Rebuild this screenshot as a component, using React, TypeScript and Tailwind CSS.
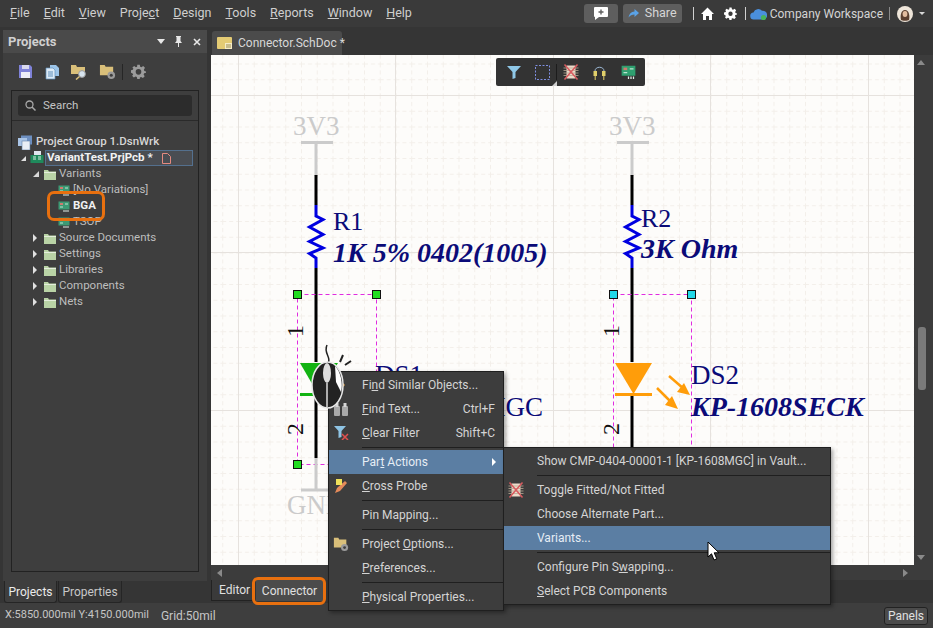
import React from "react";

const F = "font-['Roboto','Noto_Sans',sans-serif]";

function Folder({ c = "#b9d3a6", className = "" }: { c?: string; className?: string }) {
  return (
    <svg width="14" height="13" viewBox="0 0 14 13" className={className}>
      <path d="M1 2h4l1 1.5h7V12H1z" fill={c} />
      <path d="M1 4.5h12" stroke="#e4eedc" strokeWidth="1" />
    </svg>
  );
}

function Pcb({ className = "" }: { className?: string }) {
  return (
    <svg width="12" height="11" viewBox="0 0 12 11" className={className}>
      <rect x="0.5" y="0.5" width="11" height="8" fill="#3c9a74" />
      <rect x="2" y="2" width="3" height="2" fill="#d07a70" />
      <path d="M7 3h3M2 6h3" stroke="#bfe5d2" strokeWidth="1" />
      <path d="M6 9v2M8 9v2M10 9v2" stroke="#e2efe8" strokeWidth="1" />
    </svg>
  );
}

function Row({ depth, arrow, icon, bold, children }: { depth: number; arrow?: "open" | "closed"; icon: React.ReactNode; bold?: boolean; children: React.ReactNode }) {
  return (
    <div className="flex h-4 items-center" style={{ paddingLeft: depth }}>
      <span className="flex w-[10px] shrink-0 justify-start">
        {arrow === "closed" && <span className="h-0 w-0 border-y-[4px] border-l-[4px] border-y-transparent border-l-[#e0e0e0]" />}
        {arrow === "open" && <span className="h-0 w-0 border-b-[6px] border-l-[6px] border-b-[#d8d8d8] border-l-transparent" />}
      </span>
      <span className="mr-[2px] flex w-[14px] shrink-0 justify-center">{icon}</span>
      <span className={bold ? "font-bold text-[#f0f0f0]" : "text-[#bdbdbd]"}>{children}</span>
    </div>
  );
}

function MenuItem({ icon, label, hint, active, arrow }: { icon?: React.ReactNode; label: React.ReactNode; hint?: string; active?: boolean; arrow?: boolean }) {
  return (
    <div className={`relative flex h-6 items-center pl-[33px] pr-2 ${active ? "bg-[#5b7ea3] text-[#e6edf5]" : "text-[#d4d4d4]"}`}>
      {icon && <span className="absolute left-[4px] top-[4px] flex h-4 w-4 items-center justify-center">{icon}</span>}
      <span className="whitespace-nowrap">{label}</span>
      {hint && <span className="ml-auto whitespace-nowrap">{hint}</span>}
      {arrow && <span className="ml-auto mr-[-1px] h-0 w-0 border-y-[4px] border-l-[4px] border-y-transparent border-l-white" />}
    </div>
  );
}

function Sep({ left = 33 }: { left?: number }) {
  return <div className="my-[2px] h-px bg-[#1f1f1f]" style={{ marginLeft: left }} />;
}

function XChip({ size = 16 }: { size?: number }) {
  return (
    <svg width={size} height={size} viewBox="0 0 16 16">
      <rect x="3.5" y="1.5" width="9" height="13" fill="#ecd9c9" />
      <path d="M0.5 4h15M0.5 6.5h15M0.5 9h15M0.5 11.5h15" stroke="#b9a893" strokeWidth="0.8" />
      <path d="M1.5 0.5l13 15M14.5 0.5l-13 15" stroke="#d85a5f" strokeWidth="1.5" />
    </svg>
  );
}

function FolderGear({ size = 18 }: { size?: number }) {
  return (
    <svg width={size} height={size} viewBox="0 0 18 18">
      <path d="M1 2h5l1 2h8v9H1z" fill="#d9bf7a" />
      <circle cx="13" cy="13" r="4" fill="#9a9a9a" />
      <circle cx="13" cy="13" r="1.6" fill="#3d3d3d" />
    </svg>
  );
}

export default function App() {
  const menu = ["File", "Edit", "View", "Project", "Design", "Tools", "Reports", "Window", "Help"];
  const under: Record<string, [string, string, string]> = {
    File: ["", "F", "ile"],
    Edit: ["", "E", "dit"],
    View: ["", "V", "iew"],
    Project: ["Proje", "c", "t"],
    Design: ["", "D", "esign"],
    Tools: ["", "T", "ools"],
    Reports: ["", "R", "eports"],
    Window: ["", "W", "indow"],
    Help: ["", "H", "elp"],
  };
  const hLines = [95, 252.5, 410];
  const vLines = [238, 395.5, 553, 710.5, 868];
  const serif = "'Liberation Serif',serif";
  return (
    <div className={`relative flex h-[628px] w-[933px] flex-col overflow-hidden bg-[#353535] text-[12px] ${F}`}>
      {/* title bar */}
      <div className="flex h-[27px] shrink-0 items-center bg-[#3a3a3a] text-[12.5px] text-[#cfcfcf]">
        <div className="flex gap-[14px] pl-[10px]">
          {menu.map((m) => (
            <span key={m}>
              {under[m][0]}
              <u>{under[m][1]}</u>
              {under[m][2]}
            </span>
          ))}
        </div>
        <div className="ml-auto flex h-full items-center">
          <div className="flex h-[19px] w-[34px] items-center justify-center rounded-[3px] bg-[#5e5e5e]">
            <svg width="16" height="15" viewBox="0 0 16 15">
              <path d="M2 1h12a1 1 0 0 1 1 1v8a1 1 0 0 1-1 1H6l-4 3v-3a1 1 0 0 1-1-1V2a1 1 0 0 1 1-1z" fill="#fff" />
              <path d="M8 3.5v5M5.5 6h5" stroke="#5e5e5e" strokeWidth="1.4" />
            </svg>
          </div>
          <div className="ml-[5px] flex h-[19px] w-[59px] items-center justify-center gap-[6px] rounded-[3px] bg-[#5e5e5e] text-[#d6d6d6]">
            <svg width="11" height="9" viewBox="0 0 11 9">
              <path d="M6.5 0L11 4 6.5 8V5.5C4 5.5 2 6.5 0.5 8.5 1 5 3 2.8 6.5 2.5z" fill="#5aa2e6" />
            </svg>
            <span>Share</span>
          </div>
          <div className="ml-[11px] h-[13px] w-px bg-[#d0d0d0]" />
          <svg className="ml-[7px]" width="13" height="13" viewBox="0 0 13 13">
            <path d="M6.5 0.5L13 7h-2v6H8V9H5v4H2V7H0z" fill="#fff" />
          </svg>
          <svg className="ml-[10px]" width="13" height="13" viewBox="0 0 24 24">
            <path d="M10 1h4l.7 3.2 2 .8L19.5 3.3l2.8 2.8L20.6 9l.8 2L24 12v0l0 2-3 .7-.8 2 1.7 2.8-2.8 2.8-2.9-1.7-2 .8L14 24h-4l-.7-3.2-2-.8-2.8 1.7-2.8-2.8L3.4 17l-.8-2L0 14v-4l3-.7.8-2L2.1 6l2.8-2.8L7.8 5l2-.8z" fill="#fff" />
            <circle cx="12" cy="12.5" r="4" fill="#3a3a3a" />
          </svg>
          <div className="ml-[8px] h-[13px] w-px bg-[#d0d0d0]" />
          <svg className="ml-[4px]" width="17" height="14" viewBox="0 0 17 14">
            <path d="M4 12.5a3.5 3.5 0 0 1-.5-7A5 5 0 0 1 12 3.8 4 4 0 0 1 13.5 12.5z" fill="#4a8fdc" />
            <circle cx="13.5" cy="10.5" r="2.6" fill="#49b35a" />
          </svg>
          <span className="ml-[3px] whitespace-nowrap text-[12px] text-[#d4d4d4]">Company Workspace</span>
          <div className="ml-[6px] h-[13px] w-px bg-[#8a8a8a]" />
          <svg className="ml-[7px]" width="16" height="16" viewBox="0 0 16 16">
            <circle cx="8" cy="8" r="8" fill="#efe6da" />
            <path d="M4 14c-1-4 0-10 4-10s5 6 4 10c-1 1-7 1-8 0z" fill="#5c4030" />
            <ellipse cx="8" cy="8" rx="2.4" ry="3" fill="#e3bd9f" />
          </svg>
          <span className="ml-[6px] mr-[8px] h-0 w-0 border-x-[3px] border-t-[3px] border-x-transparent border-t-[#d8d8d8]" />
        </div>
      </div>

      {/* main */}
      <div className="flex min-h-0 flex-1">
        {/* left panel */}
        <div className="flex w-[211px] shrink-0 flex-col pl-[3px] pr-[4px] pt-[3px]">
          <div className="flex h-[23px] shrink-0 items-center bg-[#4a4a4a] pl-[5px] pr-[6px]">
            <span className="text-[13px] font-bold text-[#d0d0d0]">Projects</span>
            <span className="ml-auto h-0 w-0 border-x-[4px] border-t-[5px] border-x-transparent border-t-[#e8e8e8]" />
            <svg className="ml-[9px]" width="9" height="11" viewBox="0 0 9 11">
              <path d="M2 0h5v1H6.5v4L8 7H5v4H4V7H1l1.5-2V1H2z" fill="#e8e8e8" />
            </svg>
            <svg className="ml-[10px]" width="8" height="8" viewBox="0 0 8 8">
              <path d="M1 1l6 6M7 1L1 7" stroke="#e8e8e8" strokeWidth="1.6" />
            </svg>
          </div>
          <div className="flex min-h-0 flex-1 flex-col bg-[#3e3e3e]">
            <div className="flex h-[37px] shrink-0 items-center pl-[15px]">
              <svg width="15" height="15" viewBox="0 0 15 15">
                <path d="M1 1h11l2 2v11H1z" fill="#7f82d8" />
                <rect x="4" y="1" width="7" height="4" fill="#d8d8ee" />
                <rect x="3" y="8" width="9" height="6" fill="#eeeef8" />
              </svg>
              <svg className="ml-[12px]" width="15" height="16" viewBox="0 0 15 16">
                <path d="M5 1h6l3 3v8H5z" fill="#9cc4e8" />
                <path d="M1 4h7l2 2v9H1z" fill="#dceaf6" stroke="#5f8fbb" strokeWidth="0.7" />
                <path d="M3 8h5M3 10h5M3 12h5" stroke="#5f8fbb" />
              </svg>
              <svg className="ml-[11px]" width="17" height="16" viewBox="0 0 17 16">
                <path d="M0 1h5l1 2h8v7H0z" fill="#d9bf7a" />
                <circle cx="11" cy="10" r="3.4" fill="#d7e4ee" stroke="#9a9a9a" />
                <path d="M8.5 12.5L5 15.5" stroke="#d9bf7a" strokeWidth="1.6" />
              </svg>
              <span className="ml-[11px]"><FolderGear size={17} /></span>
              <div className="ml-[6px] h-[16px] w-px bg-[#262626]" />
              <svg className="ml-[8px]" width="15" height="15" viewBox="0 0 24 24">
                <path d="M10 1h4l.7 3.2 2 .8L19.5 3.3l2.8 2.8L20.6 9l.8 2L24 12v2l-3 .7-.8 2 1.7 2.8-2.8 2.8-2.9-1.7-2 .8L14 24h-4l-.7-3.2-2-.8-2.8 1.7-2.8-2.8L3.4 17l-.8-2L0 14v-4l3-.7.8-2L2.1 6l2.8-2.8L7.8 5l2-.8z" fill="#9b9b9b" />
                <circle cx="12" cy="12.5" r="4.5" fill="#3e3e3e" />
              </svg>
            </div>
            <div className="mx-[8px] mb-[9px] flex min-h-0 flex-1 flex-col border border-[#222] bg-[#3e3e3e]">
              <div className="border-b border-[#2a2a2a] px-[6px] pb-[4px] pt-[4px]">
                <div className="flex h-[21px] items-center rounded-[3px] bg-[#2c2c2c] pl-[7px] text-[#c4c4c4]">
                  <svg width="11" height="11" viewBox="0 0 11 11">
                    <circle cx="4.5" cy="4.5" r="3.5" fill="none" stroke="#a8a8a8" strokeWidth="1.3" />
                    <path d="M7 7l3.5 3.5" stroke="#a8a8a8" strokeWidth="1.5" />
                  </svg>
                  <span className="ml-[7px] text-[11.5px]">Search</span>
                </div>
              </div>
              <div className="pl-[5px] pt-[13px] text-[11.5px]">
                <div className="flex h-4 items-center">
                  <svg className="mr-[2px]" width="17" height="15" viewBox="0 0 17 15">
                    <rect x="4" y="0.5" width="11" height="9" fill="#6d8fc0" />
                    <rect x="1" y="3" width="9" height="8" fill="#a9c4e6" />
                    <rect x="5" y="6" width="8" height="9" fill="#e8eef6" stroke="#5f7fa8" strokeWidth="0.6" />
                  </svg>
                  <span className="whitespace-nowrap font-medium text-[#d6d6d6]">Project Group 1.DsnWrk</span>
                </div>
                <div className="flex h-4 items-center">
                  <span className="ml-[4px] mr-[4px] h-0 w-0 border-b-[5px] border-l-[5px] border-b-[#e0e0e0] border-l-transparent" />
                  <svg width="15" height="14" viewBox="0 0 15 14">
                    <rect x="4" y="0" width="7" height="6" fill="#dfe6ee" />
                    <rect x="0.5" y="4" width="13" height="8" fill="#1f8a5c" />
                    <path d="M3 6h3M3 8h3M8 6h3M8 8h3" stroke="#d7f0e2" />
                  </svg>
                  <div className="relative flex h-[16px] w-[148px] items-center border border-[#54708e] bg-[#4a4d52] pl-[1px] font-bold text-[#f2f2f2]">
                    <span className="whitespace-nowrap">VariantTest.PrjPcb *</span>
                    <svg className="absolute left-[116px] top-[2px]" width="9" height="11" viewBox="0 0 9 11">
                      <path d="M0.5 0.5h5l3 3v7h-8z" fill="none" stroke="#e58a80" />
                    </svg>
                  </div>
                </div>
                <Row depth={16} arrow="open" icon={<Folder />}>Variants</Row>
                <Row depth={30} icon={<Pcb />}>[No Variations]</Row>
                <Row depth={30} icon={<Pcb />} bold>BGA</Row>
                <Row depth={30} icon={<Pcb />}>TSOP</Row>
                <Row depth={16} arrow="closed" icon={<Folder />}>Source Documents</Row>
                <Row depth={16} arrow="closed" icon={<Folder />}>Settings</Row>
                <Row depth={16} arrow="closed" icon={<Folder />}>Libraries</Row>
                <Row depth={16} arrow="closed" icon={<Folder />}>Components</Row>
                <Row depth={16} arrow="closed" icon={<Folder />}>Nets</Row>
              </div>
            </div>
          </div>
          <div className="flex h-[22px] shrink-0 bg-[#353535] pl-[1px] text-[#d0d0d0]">
            <div className="flex w-[53px] items-center justify-center rounded-b-[3px] border border-t-0 border-[#252525] bg-[#3e3e3e] text-[#ececec]">Projects</div>
            <div className="ml-[1px] flex w-[64px] items-center justify-center rounded-b-[3px] border border-t-0 border-[#252525] text-[#c8c8c8]">Properties</div>
          </div>
        </div>

        {/* document column */}
        <div className="flex min-w-0 flex-1 flex-col">
          <div className="flex h-[28px] shrink-0 items-end pl-[1px]">
            <div className="flex h-[24px] w-[130px] items-center rounded-t-[3px] bg-[#4b4b4b] pl-[5px] text-[#d8d8d8]">
              <svg className="mr-[6px] shrink-0" width="15" height="12" viewBox="0 0 15 12">
                <rect x="0" y="0" width="15" height="12" rx="1" fill="#e4cb74" />
                <rect x="8" y="6" width="7" height="6" fill="#f5ecc8" />
                <path d="M9 8h5M9 10h5" stroke="#9b8b4c" />
              </svg>
              <span className="whitespace-nowrap text-[12px]">Connector.SchDoc *</span>
            </div>
          </div>
          <div className="flex min-h-0 flex-1">
            <div className="relative min-w-0 flex-1 overflow-hidden bg-[#fdfcfa]">
              <svg className="absolute inset-0 h-full w-full" viewBox="211 55 703 510" preserveAspectRatio="none">
                <defs>
                  <pattern id="minor" x="238" y="95" width="15.75" height="15.75" patternUnits="userSpaceOnUse">
                    <path d="M0.5 0V15.75M0 0.5H15.75" stroke="#f3efea" strokeWidth="1" strokeDasharray="4 3" fill="none" />
                  </pattern>
                </defs>
                <rect x="211" y="55" width="703" height="510" fill="url(#minor)" />
                {hLines.map((y) => <line key={y} x1="211" x2="914" y1={Math.floor(y) + 0.5} y2={Math.floor(y) + 0.5} stroke="#e6e2de" />)}
                {vLines.map((x) => <line key={x} x1={Math.floor(x) + 0.5} x2={Math.floor(x) + 0.5} y1="55" y2="565" stroke="#e6e2de" />)}

                {/* column 1 */}
                <text x="293" y="135" fontFamily={serif} fontSize="27" fill="#cbcbcb">3V3</text>
                <path d="M301 142.5H333M316 144V176" stroke="#cbcbcb" strokeWidth="3" fill="none" />
                <path d="M316 175V205M316 268V362M316 396V458" stroke="#000" strokeWidth="3" fill="none" />
                <path d="M316 205V216L323 219.5L309.5 227L323 234.5L309.5 241.5L323 248L309.5 253.5L316 258V268" stroke="#0000e0" strokeWidth="3" fill="none" />
                <text x="333" y="230" fontFamily={serif} fontSize="26" fill="#0b0b78">R1</text>
                <text x="333" y="262" fontFamily={serif} fontSize="28" fontWeight="700" fontStyle="italic" fill="#0b0b78">1K 5% 0402(1005)</text>
                <rect x="297.5" y="294.5" width="79" height="170" fill="none" stroke="#e02ce0" strokeDasharray="4 3" />
                <text transform="translate(303 337) rotate(-90)" fontFamily={serif} fontSize="24" fill="#111">1</text>
                <text transform="translate(303 435) rotate(-90)" fontFamily={serif} fontSize="24" fill="#111">2</text>
                <path d="M300 363H338L318 394z" fill="#12b312" />
                <rect x="300" y="393" width="38" height="3" fill="#12b312" />
                <text x="375" y="384" fontFamily={serif} fontSize="27" fill="#0b0b78">DS1</text>
                <text x="543" y="416" textAnchor="end" fontFamily={serif} fontSize="27" fill="#0b0b78">KP-1608MGC</text>
                <path d="M301 490H333M316 458V489" stroke="#cbcbcb" strokeWidth="3" fill="none" />
                <text x="287" y="514" fontFamily={serif} fontSize="27" fill="#cbcbcb">GND</text>
                {[[297, 294], [376, 294], [297, 464]].map(([x, y]) => (
                  <rect key={`${x}${y}`} x={x - 3.5} y={y - 3.5} width="8" height="8" fill="#22dd22" stroke="#111" />
                ))}

                {/* column 2 */}
                <text x="609" y="135" fontFamily={serif} fontSize="27" fill="#cbcbcb">3V3</text>
                <path d="M617 142.5H649M632 144V176" stroke="#cbcbcb" strokeWidth="3" fill="none" />
                <path d="M632 175V205M632 268V362M632 396V450" stroke="#000" strokeWidth="3" fill="none" />
                <path d="M632 205V216L639 219.5L625.5 227L639 234.5L625.5 241.5L639 248L625.5 253.5L632 258V268" stroke="#0000e0" strokeWidth="3" fill="none" />
                <text x="641" y="227" fontFamily={serif} fontSize="26" fill="#0b0b78">R2</text>
                <text x="641" y="258" fontFamily={serif} fontSize="28" fontWeight="700" fontStyle="italic" fill="#0b0b78">3K Ohm</text>
                <rect x="613.5" y="294.5" width="78" height="170" fill="none" stroke="#e02ce0" strokeDasharray="4 3" />
                <text transform="translate(619 337) rotate(-90)" fontFamily={serif} fontSize="24" fill="#111">1</text>
                <text transform="translate(619 435) rotate(-90)" fontFamily={serif} fontSize="24" fill="#111">2</text>
                <path d="M615 363H652L633.5 394z" fill="#ff9d0a" />
                <rect x="615" y="393" width="37" height="3" fill="#ff9d0a" />
                <path d="M669 376L684 389" stroke="#ff9d0a" strokeWidth="2.5" />
                <path d="M690 395L677 392L684 383z" fill="#ff9d0a" />
                <path d="M657 388L671 402" stroke="#ff9d0a" strokeWidth="2.5" />
                <path d="M678 409L665 405L672 396z" fill="#ff9d0a" />
                <text x="691" y="384" fontFamily={serif} fontSize="27" fill="#0b0b78">DS2</text>
                <text x="691" y="416" fontFamily={serif} fontSize="28" fontWeight="700" fontStyle="italic" fill="#0b0b78">KP-1608SECK</text>
                {[[613, 294], [691, 294]].map(([x, y]) => (
                  <rect key={`${x}${y}`} x={x - 3.5} y={y - 3.5} width="8" height="8" fill="#22d8e8" stroke="#111" />
                ))}
              </svg>

              {/* floating toolbar */}
              <div className="absolute left-[285px] top-[3px] flex h-[28px] w-[149px] items-center rounded-[2px] bg-[#333] pl-[11px]">
                <svg width="14" height="13" viewBox="0 0 14 13">
                  <path d="M0 0h14L8.5 6v6l-3 1V6z" fill="#8fc8e8" />
                </svg>
                <svg className="ml-[14px]" width="15" height="15" viewBox="0 0 15 15">
                  <rect x="0.5" y="0.5" width="14" height="14" fill="none" stroke="#7f8fe0" strokeDasharray="2 1.5" />
                </svg>
                <span className="absolute left-[56px] top-[23px] h-0 w-0 border-b-[5px] border-l-[5px] border-b-[#cfcfcf] border-l-transparent" />
                <div className="ml-[6px] h-[16px] w-px bg-[#1c1c1c]" />
                <span className="ml-[6px]"><XChip /></span>
                <svg className="ml-[13px]" width="15" height="15" viewBox="0 0 15 15">
                  <path d="M3 6C3 1 12 1 12 6" fill="none" stroke="#9db9d6" strokeWidth="1" />
                  <rect x="1.5" y="6" width="3.5" height="5" fill="#e0cf6a" />
                  <rect x="10" y="6" width="3.5" height="5" fill="#e0cf6a" />
                  <path d="M3.2 11v4M11.8 11v4" stroke="#e0cf6a" />
                </svg>
                <span className="ml-[14px]"><svg width="15" height="14" viewBox="0 0 12 11"><rect x="0.5" y="0.5" width="11" height="8" fill="#2fa070" /><rect x="2" y="2" width="3" height="2" fill="#d07a70" /><path d="M7 3h3M2 6h3" stroke="#bfe5d2" /><path d="M6 9v2M8 9v2M10 9v2" stroke="#e2efe8" /></svg></span>
              </div>
            </div>
            {/* vertical scrollbar */}
            <div className="relative w-[19px] shrink-0 bg-[#3c3c3c]">
              <span className="absolute left-[3px] top-[5px] h-0 w-0 border-x-[4px] border-b-[5px] border-x-transparent border-b-[#8a8a8a]" />
              <div className="absolute left-[4px] top-[272px] h-[63px] w-[8px] rounded-[3px] bg-[#7a7a7a]" />
              <span className="absolute bottom-[5px] left-[3px] h-0 w-0 border-x-[4px] border-t-[5px] border-x-transparent border-t-[#8a8a8a]" />
            </div>
          </div>
          <div className="flex h-[15px] shrink-0 items-center justify-between bg-[#3c3c3c] pl-[6px] pr-[25px]">
            <span className="h-0 w-0 border-y-[4px] border-r-[5px] border-y-transparent border-r-[#8a8a8a]" />
            <span className="h-0 w-0 border-y-[4px] border-l-[5px] border-y-transparent border-l-[#8a8a8a]" />
          </div>
          <div className="flex h-[23px] shrink-0 items-start bg-[#353535] text-[#e0e0e0]">
            <div className="flex h-[21px] w-[41px] items-center border-l border-b border-[#222] bg-[#3a3a3a] pl-[7px]">Editor</div>
            <div className="ml-[4px] flex h-[21px] w-[67px] items-center justify-center bg-[#4b4b4b]">Connector</div>
          </div>
        </div>
      </div>

      {/* status bar */}
      <div className="flex h-[25px] shrink-0 items-center bg-[#3e3e3e] pl-[5px] pr-[5px] text-[#c6c6c6]">
        <span className="text-[11px]">X:5850.000mil Y:4150.000mil</span>
        <span className="ml-[12px]">Grid:50mil</span>
        <div className="ml-auto flex h-[18px] w-[44px] items-center justify-center rounded-[3px] border border-[#222] bg-[#4b4b4b] text-[#e0e0e0]">Panels</div>
      </div>

      {/* orange callouts */}
      <div className="pointer-events-none absolute left-[47px] top-[191px] h-[30px] w-[58px] rounded-[7px] border-[3px] border-[#e8700f]" />
      <div className="pointer-events-none absolute left-[252px] top-[577px] h-[28px] w-[74px] rounded-[6px] border-[3px] border-[#e8700f]" />

      {/* context menu */}
      <div className="absolute left-[328px] top-[371px] w-[176px] border border-[#1f1f1f] bg-[#3d3d3d] pb-[1px] pt-px shadow-[2px_2px_4px_rgba(0,0,0,0.35)]">
        <MenuItem label={<>Fi<u>n</u>d Similar Objects...</>} icon={<svg width="14" height="14" viewBox="0 0 14 14"><path d="M2 12L9 5l2 2-7 7z" fill="#e0a14a" /></svg>} />
        <MenuItem
          label={<><u>F</u>ind Text...</>}
          hint="Ctrl+F"
          icon={<svg width="16" height="13" viewBox="0 0 16 13"><rect x="1" y="3" width="6" height="10" rx="1" fill="#a9a9a9" /><rect x="9" y="3" width="6" height="10" rx="1" fill="#a9a9a9" /><rect x="2.5" y="0" width="3" height="4" fill="#d6d6d6" /><rect x="10.5" y="0" width="3" height="4" fill="#d6d6d6" /></svg>}
        />
        <MenuItem
          label={<><u>C</u>lear Filter</>}
          hint="Shift+C"
          icon={<svg width="15" height="14" viewBox="0 0 15 14"><path d="M0 0h12L7.5 5v6L4.5 12V5z" fill="#8fc4e4" /><path d="M8 8l6 6M14 8l-6 6" stroke="#e0504f" strokeWidth="1.5" /></svg>}
        />
        <Sep />
        <MenuItem active arrow label={<>Par<u>t</u> Actions</>} />
        <MenuItem
          label={<><u>C</u>ross Probe</>}
          icon={<svg width="14" height="15" viewBox="0 0 14 15"><path d="M1 14l2-5 8-7 2 2-7 8z" fill="#e48a5a" /><rect x="2" y="0" width="6" height="6" fill="#efe05a" /></svg>}
        />
        <Sep />
        <MenuItem label="Pin Mapping..." />
        <Sep />
        <MenuItem label={<>Project <u>O</u>ptions...</>} icon={<FolderGear size={16} />} />
        <MenuItem label={<><u>P</u>references...</>} />
        <Sep />
        <MenuItem label={<><u>P</u>hysical Properties...</>} />
      </div>

      {/* submenu */}
      <div className="absolute left-[503px] top-[447px] w-[328px] border border-[#1f1f1f] bg-[#3d3d3d] pb-px pt-px shadow-[2px_2px_4px_rgba(0,0,0,0.35)]">
        <MenuItem label="Show CMP-0404-00001-1 [KP-1608MGC] in Vault..." />
        <Sep />
        <MenuItem label="Toggle Fitted/Not Fitted" icon={<XChip />} />
        <MenuItem label="Choose Alternate Part..." />
        <MenuItem active label="Variants..." />
        <Sep />
        <MenuItem label={<>Configure Pin S<u>w</u>apping...</>} />
        <MenuItem label={<><u>S</u>elect PCB Components</>} />
      </div>

      {/* mouse graphic */}
      <svg className="pointer-events-none absolute left-[310px] top-[342px]" width="48" height="72" viewBox="0 0 48 72">
        <path d="M18 21C22 16 13 11 17 3" fill="none" stroke="#222" strokeWidth="1.5" />
        <path d="M30 20l3-7M35 23l6-4" stroke="#222" strokeWidth="2" />
        <ellipse cx="17.5" cy="43" rx="15.5" ry="23" fill="#222" stroke="#e8e8e8" strokeWidth="1.5" />
        <ellipse cx="17" cy="31" rx="4" ry="10" fill="#ddd" />
        <path d="M17 41V65" stroke="#ddd" strokeWidth="1.5" />
        <path d="M25 24C31 30 33 42 31 50L26 40z" fill="#fff" />
      </svg>

      {/* arrow cursor */}
      <svg className="pointer-events-none absolute left-[707px] top-[541px]" width="14" height="21" viewBox="0 0 14 21">
        <path d="M1 1V16L4.5 12.8L7 19L9.8 17.8L7.2 11.8H12z" fill="#fff" stroke="#000" strokeWidth="1" />
      </svg>
    </div>
  );
}
